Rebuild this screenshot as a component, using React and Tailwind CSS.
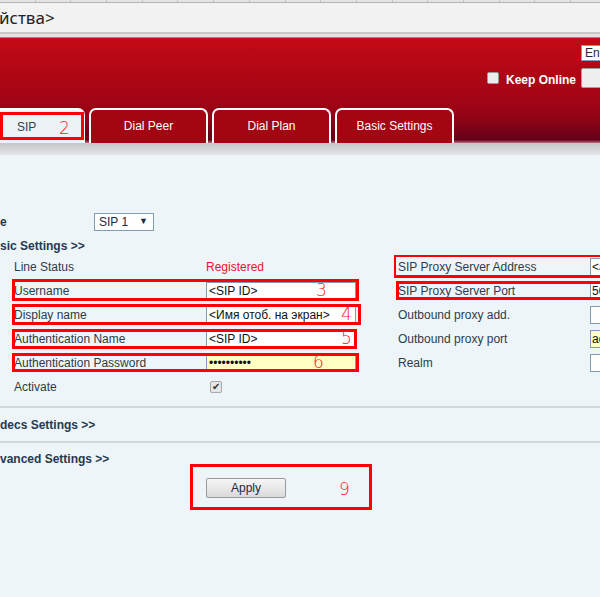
const LEFT_ROWS = [
  { label: 'Line Status', status: 'Registered' },
  { label: 'Username', value: '<SIP ID>', box: { top: 0, h: 22, w: 347 }, num: { t: '3', x: 316 } },
  { label: 'Display name', value: '<Имя отоб. на экран>', box: { top: 1, h: 21, w: 349 }, num: { t: '4', x: 341 } },
  { label: 'Authentication Name', value: '<SIP ID>', box: { top: 2, h: 20, w: 345 }, num: { t: '5', x: 341 } },
  { label: 'Authentication Password', value: '••••••••••', yellow: true, box: { top: 2, h: 19, w: 347 }, num: { t: '6', x: 313 } },
  { label: 'Activate', check: true },
];

const RIGHT_ROWS = [
  { label: 'SIP Proxy Server Address', value: '<a', box: { left: -1, top: -1, h: 24 } },
  { label: 'SIP Proxy Server Port', value: '50', box: { left: 2, top: 2, h: 19 } },
  { label: 'Outbound proxy add.', value: '' },
  { label: 'Outbound proxy port', value: 'ad', yellow: true },
  { label: 'Realm', value: '' },
];

const TABS = ['Dial Peer', 'Dial Plan', 'Basic Settings'];

function TextBox({ value, yellow, pad = 'px-[2px]' }) {
  return (
    <div
      className={`shrink-0 w-[150px] h-[18px] border border-[#7f9db9] ${pad} leading-[16px] text-[12px] text-[#111] whitespace-nowrap overflow-hidden ${
        yellow ? 'bg-[#ffffc4]' : 'bg-white'
      }`}
    >
      {value}
    </div>
  );
}

function Mark({ t, x }) {
  return (
    <span
      className="absolute inset-y-0 flex items-center text-[17px] font-light text-[#ff1a1a] font-['DejaVu_Sans',sans-serif]"
      style={{ left: x }}
    >
      {t}
    </span>
  );
}

export default function App() {
  return (
    <div className="w-[600px] h-[597px] overflow-hidden bg-[#eef5f8] font-['Liberation_Sans',Arial,sans-serif] text-[12px] text-[#2e3b49]">
      {/* browser-ish strip */}
      <div className="h-[3px] flex bg-[#e4e4e4] border-b border-[#b4b4b4]">
        {Array.from({ length: 17 }).map((_, i) => (
          <div key={i} className="w-[35.7px] shrink-0 border-r border-[#c4c4c4]" />
        ))}
      </div>
      <div className="h-[29px] flex items-center bg-[#f2f2f2] font-['Noto_Sans',sans-serif] text-[17px] text-[#222] ml-[-1px]">
        йства&gt;
      </div>
      <div className="h-[6px] bg-[#e2e2e2] border-t-2 border-[#c6c6c6] border-b border-b-[#8e8e8e]" />

      {/* red header */}
      <div className="h-[105px] flex flex-col bg-[linear-gradient(to_bottom,#c40a16_0%,#a00414_62%,#8e0316_78%,#640019_97%,#c07080_100%)]">
        <div className="flex justify-end pt-[7px] mr-[-30px]">
          <div className="w-[49px] h-[16px] bg-white border border-[#7f9db9] pl-[3px] leading-[14px] text-[12px] text-[#1d2a3a]">
            En
          </div>
        </div>
        <div className="flex items-center justify-end mt-[6px] mr-[-40px]">
          <span className="w-[12px] h-[12px] bg-[#ececec] border border-[#9a9a9a] rounded-[2px]" />
          <span className="ml-[7px] mt-[4px] font-bold text-white text-[12px]">Keep Online</span>
          <div className="ml-[5px] w-[59px] h-[20px] bg-[#eeeeee] border border-[#a0a0a0] rounded-[2px]" />
        </div>
        <div className="mt-auto flex items-end gap-[4px] ml-[-33px] h-[35px]">
          <div className="w-[118px] h-[35px] shrink-0 bg-[#ecf2f5] border-2 border-b-0 border-white rounded-t-[7px] relative flex items-center">
            <span className="ml-[48px] text-[#34404c] text-[12px]">SIP</span>
            <div className="absolute left-[31px] top-[2px] w-[84px] h-[28px] border-[3px] border-[#ff0000]" />
            <span className="absolute left-[90px] top-[6px] text-[17px] font-light text-[#ff1a1a] font-['DejaVu_Sans',sans-serif]">
              2
            </span>
          </div>
          {TABS.map((t) => (
            <div
              key={t}
              className="w-[119px] h-[35px] shrink-0 bg-[#a30513] border-2 border-b-0 border-white rounded-t-[7px] flex items-center justify-center text-white text-[12px] pb-[1px]"
            >
              {t}
            </div>
          ))}
        </div>
      </div>
      <div className="h-[12px] bg-[linear-gradient(to_bottom,#c6c7cb,#e2e5e7)]" />

      {/* content */}
      <div className="flex items-center h-[18px] mt-[58px]">
        <span className="w-[94px] font-bold text-[#253a52]">e</span>
        <div className="w-[60px] h-[18px] border border-[#7f9db9] bg-white flex items-center pl-[4px] text-[12px] text-[#1d2a3a]">
          SIP 1<span className="ml-auto mr-[5px] text-[9px]">▼</span>
        </div>
      </div>
      <div className="mt-[7px] h-[17px] leading-[17px] font-bold text-[#253a52]">sic Settings &gt;&gt;</div>

      <div className="flex">
        <div className="w-[394px] shrink-0">
          {LEFT_ROWS.map((r) => (
            <div key={r.label} className="relative h-[24px] flex items-center pl-[14px]">
              <span className="w-[192px] shrink-0">{r.label}</span>
              {r.status && <span className="text-[#f0102e]">{r.status}</span>}
              {r.value && <TextBox value={r.value} yellow={r.yellow} />}
              {r.check && (
                <span className="ml-[4px] w-[12px] h-[12px] bg-[#e6e6e6] border border-[#a8a8a8] rounded-[2px] flex items-center justify-center text-[10px] leading-none text-[#333]">
                  ✔
                </span>
              )}
              {r.box && (
                <div
                  className="absolute left-[12px] border-[3px] border-[#ff0000]"
                  style={{ top: r.box.top, height: r.box.h, width: r.box.w }}
                />
              )}
              {r.num && <Mark t={r.num.t} x={r.num.x} />}
            </div>
          ))}
        </div>
        <div className="w-[206px] shrink-0 overflow-hidden">
          {RIGHT_ROWS.map((r) => (
            <div key={r.label} className="relative h-[24px] flex items-center pl-[4px]">
              <span className="w-[192px] shrink-0 whitespace-nowrap">{r.label}</span>
              <TextBox value={r.value} yellow={r.yellow} pad="pl-[1px]" />
              {r.box && (
                <div
                  className="absolute w-[240px] border-[3px] border-[#ff0000]"
                  style={{ left: r.box.left, top: r.box.top, height: r.box.h }}
                />
              )}
            </div>
          ))}
        </div>
      </div>

      <div className="mt-[7px] h-[2px] bg-[#d3d7da]" />
      <div className="h-[33px] flex items-center font-bold text-[#253a52]">decs Settings &gt;&gt;</div>
      <div className="h-[2px] bg-[#d3d7da]" />
      <div className="mt-[8px] h-[16px] leading-[16px] font-bold text-[#253a52]">vanced Settings &gt;&gt;</div>

      <div className="relative mt-[11px] pl-[206px]">
        <button className="w-[80px] h-[20px] border border-[#9a9a9a] rounded-[2px] bg-[linear-gradient(to_bottom,#f6f6f6,#dadada)] text-[12px] text-[#1d2a3a]">
          Apply
        </button>
        <div className="absolute left-[190px] top-[-14px] w-[182px] h-[46px] border-[3px] border-[#ff0000]" />
        <span className="absolute left-[339px] top-[-1px] text-[17px] font-light text-[#ff1a1a] font-['DejaVu_Sans',sans-serif]">
          9
        </span>
      </div>
    </div>
  );
}
